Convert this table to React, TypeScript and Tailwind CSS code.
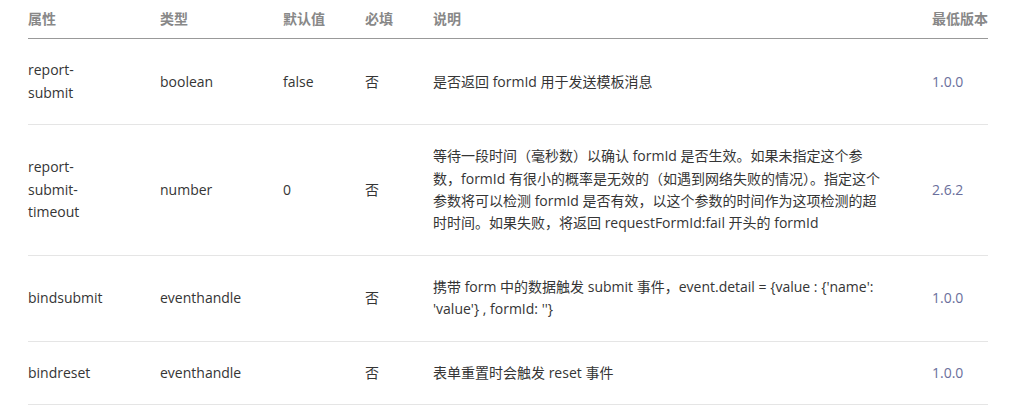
const rows = [
  {
    name: "report-submit",
    type: "boolean",
    def: "false",
    required: "否",
    desc: "是否返回 formId 用于发送模板消息",
    version: "1.0.0",
  },
  {
    name: "report-submit-timeout",
    type: "number",
    def: "0",
    required: "否",
    desc: "等待一段时间（毫秒数）以确认 formId 是否生效。如果未指定这个参数，formId 有很小的概率是无效的（如遇到网络失败的情况）。指定这个参数将可以检测 formId 是否有效，以这个参数的时间作为这项检测的超时时间。如果失败，将返回 requestFormId:fail 开头的 formId",
    version: "2.6.2",
  },
  {
    name: "bindsubmit",
    type: "eventhandle",
    def: "",
    required: "否",
    desc: "携带 form 中的数据触发 submit 事件，event.detail = {value : {'name': 'value'} , formId: ''}",
    version: "1.0.0",
  },
  {
    name: "bindreset",
    type: "eventhandle",
    def: "",
    required: "否",
    desc: "表单重置时会触发 reset 事件",
    version: "1.0.0",
  },
];

const App = () => {
  return (
    <div
      className="w-full bg-white px-[28px] text-[14px] leading-[22.4px] text-[#353535]"
      style={{ fontFamily: '"Open Sans", "Noto Sans CJK SC", sans-serif' }}
    >
      <table className="w-[960px] table-fixed border-collapse text-left">
        <colgroup>
          <col className="w-[132px]" />
          <col className="w-[123px]" />
          <col className="w-[82px]" />
          <col className="w-[68px]" />
          <col className="w-[499px]" />
          <col className="w-[56px]" />
        </colgroup>
        <thead>
          <tr className="border-b border-[#999999]">
            <th className="pt-[8px] pb-[8px] pr-[40px] font-bold text-[#888888]">属性</th>
            <th className="pt-[8px] pb-[8px] pr-[20px] font-bold text-[#888888]">类型</th>
            <th className="pt-[8px] pb-[8px] pr-[10px] font-bold text-[#888888]">默认值</th>
            <th className="pt-[8px] pb-[8px] pr-[10px] font-bold text-[#888888]">必填</th>
            <th className="pt-[8px] pb-[8px] pr-[48px] font-bold text-[#888888]">说明</th>
            <th className="pt-[8px] pb-[8px] font-bold text-[#888888] whitespace-nowrap">最低版本</th>
          </tr>
        </thead>
        <tbody>
          {rows.map((r) => (
            <tr key={r.name} className="border-b border-[#e5e5e5]">
              <td className="py-[20px] pr-[40px] align-middle">
                {r.name.split("-").map((part, i, arr) => (
                  <div key={i}>{i < arr.length - 1 ? part + "-" : part}</div>
                ))}
              </td>
              <td className="py-[20px] pr-[20px] align-middle">{r.type}</td>
              <td className="py-[20px] pr-[10px] align-middle">{r.def}</td>
              <td className="py-[20px] pr-[10px] align-middle">{r.required}</td>
              <td className="py-[20px] pr-[48px] align-middle">{r.desc}</td>
              <td className="py-[20px] align-middle text-[#6b6f9c]">{r.version}</td>
            </tr>
          ))}
        </tbody>
      </table>
    </div>
  );
};

export default App;
